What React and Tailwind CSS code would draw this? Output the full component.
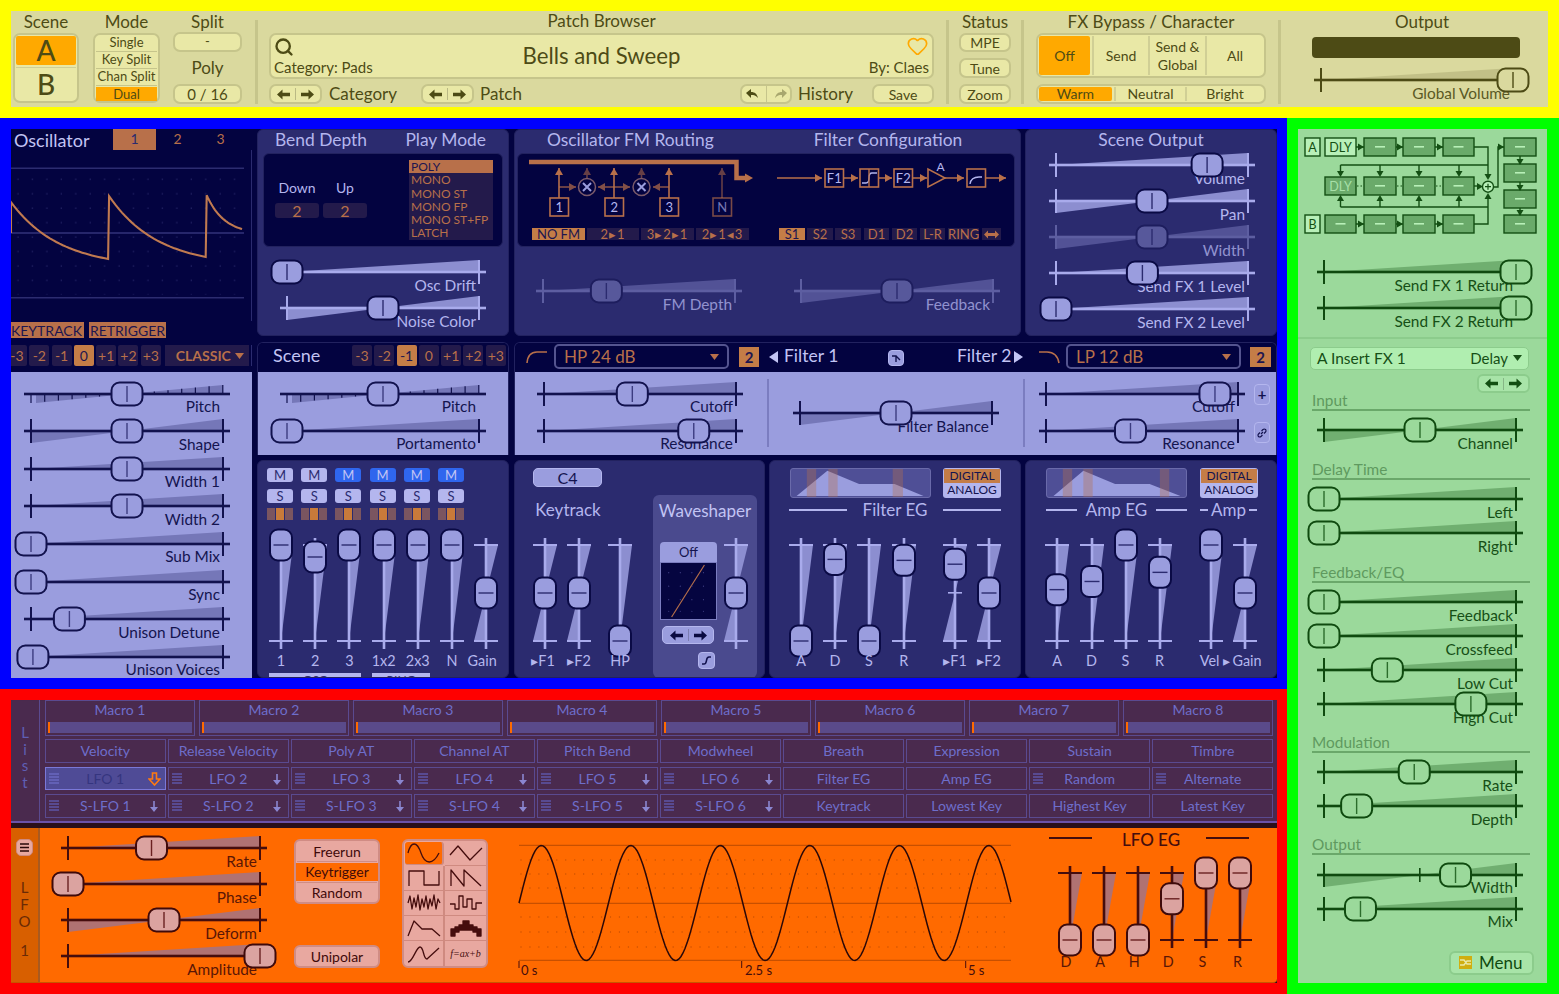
import React from "react";
import { Search, Heart } from "lucide-react";

// slider colour sets, svg attributes take the hex directly
const LAV = { line: "#12124e", tray: "#7577b8", fill: "#9a9dde", edge: "#12124e", mark: "#3c3c80", text: "text-[#14144f]" };
const NAVY = { line: "#a9abec", tray: "#8c8ed0", fill: "#9a9dde", edge: "#0a0a45", mark: "#2b2b6f", text: "text-[#b4b6ee]" };
const KHAKI = { line: "#4d4b15", tray: "#c2c087", fill: "#dad99e", edge: "#4d4b15", mark: "#4d4b15", text: "text-[#5b5925]" };
const GREEN = { line: "#0f4a0f", tray: "#70af70", fill: "#9bd99b", edge: "#0f4a0f", mark: "#2c6c2c", text: "text-[#164f16]" };
const ORANGE = { line: "#450d0d", tray: "#b07272", fill: "#dba3a0", edge: "#3f0a0a", mark: "#6a2020", text: "text-[#5a1606]" };

const ACCENT = "#b8704a";

function HSlider({ v, label, t, kind = "uni", dim, midTick, className = "" }) {
  const x = 7 + 192 * v;
  return (
    <div className={`relative w-[206px] h-[36px] shrink-0 ${className}`}>
      <span className={`absolute right-[10px] top-[21.5px] text-[15.4px] leading-[18px] whitespace-nowrap ${t.text} ${dim ? "opacity-75" : ""}`}>{label}</span>
      <svg className={`absolute left-0 top-0 overflow-visible ${dim ? "opacity-40" : ""}`} width="206" height="36">
        {kind === "uni" && <polygon points="7,18 199,6 199,18" fill={t.tray} />}
        {kind === "bi" && <polygon points="103,18 7,30 7,18" fill={t.tray} />}
        {kind === "bi" && <polygon points="103,18 199,6 199,18" fill={t.tray} />}
        {kind === "ladder" && <polygon points="103,18 12,27 12,18" fill={t.tray} />}
        {kind === "ladder" && <polygon points="103,18 199,9 199,18" fill={t.tray} />}
        {kind === "ladder" && [...Array(15).keys()].map((i) => {
          const tx = 7 + i * 13.7;
          const h = i < 7 ? 18 + 9 * (1 - i / 7) : 18 - 9 * ((i - 7) / 7);
          return <line key={i} x1={tx} x2={tx} y1="18" y2={h} stroke={t.line} strokeWidth="1.2" />;
        })}
        <rect x="0" y="16.7" width="206" height="2.6" fill={t.line} />
        {kind !== "ladder" && <rect x="6" y="6" width="2" height="24" fill={t.line} />}
        {kind !== "ladder" && <rect x="198" y="6" width="2" height="24" fill={t.line} />}
        {midTick && <rect x="102" y="11" width="1.6" height="14" fill={t.line} />}
        <rect x={x - 15.5} y="6.5" width="31" height="23" rx="8" fill={t.fill} stroke={t.edge} strokeWidth="2" />
        <rect x={x - 0.7} y="10" width="1.4" height="16" fill={t.mark} />
      </svg>
    </div>
  );
}

function VSlider({ v, label, t, kind = "uni", range = 96, midTick, labelCls = "left-[12px]", className = "" }) {
  const y = 7 + range * (1 - v);
  const b = 7 + range;
  const c = 7 + range / 2;
  return (
    <div className={`relative w-[24px] shrink-0 ${className}`} style={{ height: range + 15 }}>
      <svg className="absolute left-0 top-0 overflow-visible" width="24" height={range + 15}>
        {kind === "uni" && <polygon points={`12,${b} 24,7 12,7`} fill={t.tray} />}
        {kind === "bi" && <polygon points={`12,${c} 24,7 12,7`} fill={t.tray} />}
        {kind === "bi" && <polygon points={`12,${c} 0,${b} 12,${b}`} fill={t.tray} />}
        <rect x="10.7" y="0" width="2.6" height={range + 15} fill={t.line} />
        <rect x="0" y="6" width="24" height="2" fill={t.line} />
        <rect x="0" y={b - 1} width="24" height="2" fill={t.line} />
        {midTick && <rect x="5" y={c - 1} width="14" height="1.6" fill={t.line} />}
        <rect x="1" y={y - 15.5} width="22" height="31" rx="8" fill={t.fill} stroke={t.edge} strokeWidth="2" />
        <rect x="4.5" y={y - 0.7} width="15" height="1.4" fill={t.mark} />
      </svg>
      {label && <span className={`absolute ${labelCls} -translate-x-1/2 text-[14.4px] leading-[16px] whitespace-nowrap ${t.text} ${range > 80 ? "top-[115px]" : "top-[88px]"}`}>{label}</span>}
    </div>
  );
}

function Arrows({ color = "#4d4b15", w = 13 }) {
  return (
    <span className="flex items-center gap-[5px]">
      <svg width={w} height="11" viewBox="0 0 13 11"><path d="M0 5.5 L5.5 0.5 V3.7 H13 V7.3 H5.5 V10.5 Z" fill={color} /></svg>
      <span className="w-px h-[12px] bg-black/20" />
      <svg width={w} height="11" viewBox="0 0 13 11"><path d="M13 5.5 L7.5 0.5 V3.7 H0 V7.3 H7.5 V10.5 Z" fill={color} /></svg>
    </span>
  );
}

const KBTN = "flex items-center justify-center rounded-[7px] bg-[#e9e8a6] border-2 border-[#c6c58b] text-[#4d4b15] box-border";

function TopBar() {
  return (
    <div className="h-[118px] p-[11px] bg-[#ffff00]">
      <div className="relative flex h-[96px] w-[1537px] bg-[#dad99e] text-[#4d4b15]">
        {/* scene */}
        <div className="ml-[2px] w-[66px]">
          <div className="h-[22px] text-center text-[17px] leading-[21px]">Scene</div>
          <div className="h-[70px] rounded-[7px] bg-[#e9e8a6] border-2 border-[#c6c58b] p-[1px] flex flex-col">
            <div className="h-[30px] rounded-[2px] bg-[#ffa900] text-center text-[28px] font-medium leading-[29px]">A</div>
            <div className="h-px mt-[2px] bg-[#d0cf95]" />
            <div className="flex-1 text-center text-[28px] font-medium leading-[32px]">B</div>
          </div>
        </div>
        {/* mode */}
        <div className="ml-[14px] w-[67px]">
          <div className="h-[22px] text-center text-[17px] leading-[21px]">Mode</div>
          <div className="h-[70px] rounded-[7px] bg-[#e9e8a6] border-2 border-[#c6c58b] px-[1px] flex flex-col text-[13px] text-center leading-[15px]">
            <div className="h-[17px] border-b border-[#c6c58b]">Single</div>
            <div className="h-[17.5px] border-b border-[#c6c58b]">Key Split</div>
            <div className="h-[17.5px] border-b border-[#c6c58b]">Chan Split</div>
            <div className="h-[14px] mt-[1px] bg-[#ffa900] leading-[14px]">Dual</div>
          </div>
        </div>
        {/* split / poly */}
        <div className="ml-[13px] w-[69px]">
          <div className="h-[21px] text-center text-[17px] leading-[21px]">Split</div>
          <div className={`${KBTN} h-[20px] text-[13px]`}>-</div>
          <div className="h-[32px] text-center text-[17px] leading-[31px]">Poly</div>
          <div className={`${KBTN} h-[20px] text-[15px]`}>0 / 16</div>
        </div>
        <div className="ml-[13px] mt-[9px] w-[3px] h-[84px] bg-[#c6c58b]" />
        {/* patch browser */}
        <div className="ml-[11px] w-[665px]">
          <div className="h-[22px] text-center text-[17px] leading-[20px]">Patch Browser</div>
          <div className="h-[46px] rounded-[7px] bg-[#e9e8a6] border-2 border-[#c6c58b] flex items-stretch justify-between px-[3px]">
            <div className="w-[120px] flex flex-col justify-between">
              <Search size={20} strokeWidth={2.8} className="mt-[2px]" />
              <span className="text-[15px] leading-[20px]">Category: Pads</span>
            </div>
            <div className="text-[22.2px] leading-[42px] whitespace-nowrap">Bells and Sweep</div>
            <div className="w-[120px] flex flex-col justify-between items-end">
              <Heart size={23} strokeWidth={1.8} className="text-[#ffa900]" />
              <span className="text-[15px] leading-[20px]">By: Claes</span>
            </div>
          </div>
          <div className="flex items-center mt-[5px] h-[20px]">
            <div className={`${KBTN} w-[53px] h-[20px]`}><Arrows /></div>
            <span className="ml-[7px] w-[92px] text-[17px]">Category</span>
            <div className={`${KBTN} w-[53px] h-[20px]`}><Arrows /></div>
            <span className="ml-[6px] flex-1 text-[17px]">Patch</span>
            <div className={`${KBTN} w-[52px] h-[20px]`}>
              <svg width="15" height="12" viewBox="0 0 15 12"><path d="M1 5 L6 1 V4 C10 4 12 6 13 10 C11 7.5 9 7 6 7 V10 Z" fill="#4d4b15" /></svg>
              <span className="w-px h-[17px] mx-[6px] bg-[#c6c58b]" />
              <svg width="15" height="12" viewBox="0 0 15 12"><path d="M14 5 L9 1 V4 C5 4 3 6 2 10 C4 7.5 6 7 9 7 V10 Z" fill="#a8a76e" /></svg>
            </div>
            <span className="ml-[6px] w-[74px] text-[17px]">History</span>
            <div className={`${KBTN} w-[62px] h-[20px] text-[14px]`}>Save</div>
          </div>
        </div>
        <div className="ml-[12px] mt-[9px] w-[3px] h-[84px] bg-[#c6c58b]" />
        {/* status */}
        <div className="ml-[10px] w-[52px]">
          <div className="h-[22px] text-center text-[17px] leading-[21px] whitespace-nowrap">Status</div>
          <div className={`${KBTN} h-[19px] text-[14px]`}>MPE</div>
          <div className={`${KBTN} h-[20px] mt-[6px] text-[14px]`}>Tune</div>
          <div className={`${KBTN} h-[20px] mt-[6px] text-[14px]`}>Zoom</div>
        </div>
        <div className="ml-[10px] mt-[9px] w-[3px] h-[84px] bg-[#c6c58b]" />
        {/* fx bypass */}
        <div className="ml-[12px] w-[230px]">
          <div className="h-[22px] text-center text-[17px] leading-[21px]">FX Bypass / Character</div>
          <div className="h-[45px] rounded-[7px] bg-[#e9e8a6] border-2 border-[#c6c58b] flex text-[14px] text-center items-stretch p-[1px]">
            <div className="w-[51px] rounded-[2px] bg-[#ffa900] flex items-center justify-center">Off</div>
            <div className="w-[58px] ml-[2px] border-l-2 border-r-2 border-[#d0cf95] flex items-center justify-center">Send</div>
            <div className="w-[57px] border-r-2 border-[#d0cf95] flex items-center justify-center leading-[18px]">Send &amp;<br />Global</div>
            <div className="flex-1 flex items-center justify-center">All</div>
          </div>
          <div className="h-[20px] mt-[6px] rounded-[7px] bg-[#e9e8a6] border-2 border-[#c6c58b] flex text-[14px] text-center items-stretch p-[1px]">
            <div className="w-[73px] rounded-[2px] bg-[#ffa900] leading-[14px]">Warm</div>
            <div className="w-[73px] ml-[2px] border-l-2 border-r-2 border-[#d0cf95] leading-[14px]">Neutral</div>
            <div className="flex-1 leading-[14px]">Bright</div>
          </div>
        </div>
        <div className="ml-[12px] mt-[9px] w-[3px] h-[84px] bg-[#c6c58b]" />
        {/* output */}
        <div className="ml-[31px] w-[215px]">
          <div className="h-[26px] ml-[5px] text-center text-[17px] leading-[21px]">Output</div>
          <div className="w-[208px] h-[21px] rounded-[4px] bg-[#4d4b15]" />
          <HSlider v={1} label="Global Volume" t={KHAKI} className="ml-[2px] mt-[4px]" />
        </div>
      </div>
    </div>
  );
}

const STEP = "h-[21px] flex items-center justify-center rounded-[2px] text-[14px] leading-none";

function Steps({ active, className = "" }) {
  return (
    <div className={`flex gap-[2.3px] ${className}`}>
      {["-3", "-2", "-1", "0", "+1", "+2", "+3"].map((s) => (
        <div key={s} className={`${STEP} w-[20px] ${s === active ? "bg-[#c47d47] text-[#1d1650]" : "bg-[#231a4b] text-[#b8704a]"}`}>{s}</div>
      ))}
    </div>
  );
}

function OscColumn() {
  const sawPts = (x0, y0, x1, y1) => {
    const pts = [];
    for (let i = 0; i <= 30; i++) {
      const k = i / 30;
      const e = (1 - Math.exp(-2 * k)) / (1 - Math.exp(-2));
      pts.push(`${x0 + (x1 - x0) * k},${y0 + (y1 - y0) * e}`);
    }
    return pts.join(" ");
  };
  return (
    <div className="w-[241px] shrink-0 h-[549px] flex flex-col">
      <div className="h-[21px] flex items-start text-[#c2c4f4]">
        <span className="ml-[3px] w-[99px] text-[18px] leading-[22px]">Oscillator</span>
        <div className="w-[43px] h-[21px] bg-[#b8704a] text-[#2b2b6f] text-center text-[14px] leading-[20px]">1</div>
        <div className="w-[43px] text-center text-[14px] leading-[20px] text-[#b8704a]">2</div>
        <div className="w-[43px] text-center text-[14px] leading-[20px] text-[#b8704a]">3</div>
      </div>
      <svg width="241" height="171" viewBox="11 150 241 171" className="border-r border-[#2b2b6f]">
        <defs>
          <pattern id="dots" x="11" y="178" width="14.5" height="14.5" patternUnits="userSpaceOnUse">
            <circle cx="7" cy="1" r="0.6" fill="#3a3a80" />
          </pattern>
        </defs>
        <rect x="11" y="175" width="234" height="120" fill="url(#dots)" />
        <line x1="11" x2="245" y1="168" y2="168" stroke="#2c2c70" strokeWidth="1.5" />
        <line x1="11" x2="245" y1="233" y2="233" stroke="#33337a" strokeWidth="1.5" />
        <line x1="11" x2="245" y1="298" y2="298" stroke="#2c2c70" strokeWidth="1.5" />
        <polyline fill="none" stroke="#c07a50" strokeWidth="2.1" points={`11,233 11,202 ${sawPts(11, 202, 108.5, 259)} 109.5,196 ${sawPts(109.5, 196, 206.5, 257)} 207.5,195 ${sawPts(207.5, 195, 243, 229)}`} />
      </svg>
      <div className="h-[16px] mt-[1px] flex gap-[5px] text-[#1d1650] text-[14px] leading-[17px]">
        <div className="bg-[#b8704a] w-[73px] whitespace-nowrap">KEYTRACK</div>
        <div className="bg-[#b8704a] w-[77px] text-center whitespace-nowrap">RETRIGGER</div>
      </div>
      <div className="mt-[7px] h-[21px] flex overflow-hidden border-r border-[#2b2b6f] w-[241px]">
        <Steps active="0" className="ml-[-4px]" />
        <div className="ml-[4px] w-[84px] h-[21px] bg-[#231a4b] flex items-center justify-between pl-[11px] pr-[5px] text-[#b8704a] text-[14px] font-bold">
          CLASSIC <svg width="9" height="6"><polygon points="0,0 9,0 4.5,6" fill="#b8704a" /></svg>
        </div>
      </div>
      <div className="mt-[6px] flex-1 bg-[#9a9dde] overflow-hidden pl-[13px] pt-[3.6px] flex flex-col gap-[1.6px]">
        <HSlider v={0.5} label="Pitch" t={LAV} kind="ladder" />
        <HSlider v={0.5} label="Shape" t={LAV} kind="bi" />
        <HSlider v={0.5} label="Width 1" t={LAV} />
        <HSlider v={0.5} label="Width 2" t={LAV} />
        <HSlider v={0} label="Sub Mix" t={LAV} />
        <HSlider v={0} label="Sync" t={LAV} />
        <HSlider v={0.2} label="Unison Detune" t={LAV} />
        <HSlider v={0.01} label="Unison Voices" t={LAV} />
      </div>
    </div>
  );
}

const PANEL = "rounded-[6px] bg-[#2b2b6f] border border-[#22225f] box-border";
const TITLE = "text-[17.4px] text-[#b4b6ee] leading-[20px]";

function BendPanel() {
  return (
    <div className={`${PANEL} w-[252px] h-[207px]`}>
      <div className={`h-[23px] flex justify-between pl-[17px] pr-[22px] ${TITLE}`}>
        <span>Bend Depth</span>
        <span>Play Mode</span>
      </div>
      <div className="ml-[5px] w-[240px] h-[94px] rounded-[6px] bg-[#030340] border border-[#22225f] flex">
        <div className="w-[145px] pl-[11px] pt-[25px]">
          <div className="flex text-[14px] text-[#b4b6ee] leading-[18px] text-center">
            <span className="w-[44px]">Down</span>
            <span className="w-[44px] ml-[4px]">Up</span>
          </div>
          <div className="flex gap-[4px] mt-[6px] text-[16px] text-[#b8704a] text-center leading-[15px]">
            <div className="w-[44px] h-[15px] rounded-[3px] bg-[#231a4b]">2</div>
            <div className="w-[44px] h-[15px] rounded-[3px] bg-[#231a4b]">2</div>
          </div>
        </div>
        <div className="mt-[6px] w-[84px] h-[80px] pl-[2px] bg-[#231a4b] text-[#b8704a] text-[12px] leading-[13.3px]">
          <div className="bg-[#b8704a] text-[#1d1650] -ml-[2px] pl-[2px]">POLY</div>
          <div>MONO</div>
          <div>MONO ST</div>
          <div>MONO FP</div>
          <div className="whitespace-nowrap">MONO ST+FP</div>
          <div>LATCH</div>
        </div>
      </div>
      <HSlider v={0} label="Osc Drift" t={NAVY} className="ml-[22px] mt-[7px]" />
      <HSlider v={0.5} label="Noise Color" t={NAVY} kind="bi" className="ml-[22px]" />
    </div>
  );
}

function Arrow({ x1, y1, x2, y2, c = ACCENT, o = 1 }) {
  const dx = Math.sign(x2 - x1);
  const dy = Math.sign(y2 - y1);
  const head = dx
    ? `${x2},${y2} ${x2 - 7 * dx},${y2 - 4} ${x2 - 7 * dx},${y2 + 4}`
    : `${x2},${y2} ${x2 - 4},${y2 - 7 * dy} ${x2 + 4},${y2 - 7 * dy}`;
  return (
    <g opacity={o}>
      <line x1={x1} y1={y1} x2={x2} y2={y2} stroke={c} strokeWidth="1.6" />
      <polygon points={head} fill={c} />
    </g>
  );
}

function OscBox({ x, y, label, o = 1, w = 18.5 }) {
  return (
    <g opacity={o}>
      <rect x={x} y={y} width={w} height="18" fill="#030340" stroke={ACCENT} strokeWidth="1.6" />
      {label && <text x={x + w / 2} y={y + 14} textAnchor="middle" fontSize="13" fill="#b4b6ee" fontFamily="Lato">{label}</text>}
    </g>
  );
}

function Xnode({ x }) {
  return (
    <g>
      <circle cx={x} cy="187" r="8.5" fill="none" stroke="#7a5a6a" strokeWidth="1.5" />
      <path d={`M${x - 4} 183 L${x + 4} 191 M${x + 4} 183 L${x - 4} 191`} stroke="#9a9dde" strokeWidth="2" />
    </g>
  );
}

const ROUTE = "h-[12px] bg-[#231a4b] text-[#b8704a] text-[13px] leading-[12px] text-center whitespace-nowrap";
const ROUTE_ON = "h-[12px] bg-[#c47d47] text-[#1d1650] text-[13px] leading-[12px] text-center whitespace-nowrap";

function FmPanel() {
  return (
    <div className={`${PANEL} w-[507px] h-[207px]`}>
      <div className={`h-[23px] flex ${TITLE}`}>
        <span className="ml-[32px]">Oscillator FM Routing</span>
        <span className="ml-[100px]">Filter Configuration</span>
      </div>
      <div className="ml-[2px] w-[498px] h-[94px] rounded-[6px] bg-[#030340] border border-[#22225f] overflow-hidden">
        <svg width="496" height="72" viewBox="518 154 496 72" className="block">
          <path d="M529 162 H736.5 V178 H746" fill="none" stroke={ACCENT} strokeWidth="4.5" />
          <polygon points="753,178 745,173.5 745,182.5" fill={ACCENT} />
          <Arrow x1={559} y1={198} x2={559} y2={168} />
          <Arrow x1={614} y1={198} x2={614} y2={168} />
          <Arrow x1={669} y1={198} x2={669} y2={168} />
          <Arrow x1={722} y1={198} x2={722} y2={168} o={0.55} />
          <Arrow x1={587} y1={178} x2={587} y2={168} o={0.55} />
          <Arrow x1={641.5} y1={178} x2={641.5} y2={168} o={0.55} />
          <Arrow x1={559} y1={187} x2={576} y2={187} o={0.7} />
          <Arrow x1={614} y1={187} x2={598} y2={187} o={0.7} />
          <Arrow x1={614} y1={187} x2={630} y2={187} o={0.7} />
          <Arrow x1={669} y1={187} x2={653} y2={187} o={0.7} />
          <Xnode x={587} />
          <Xnode x={641.5} />
          <OscBox x={550} y={198} label="1" />
          <OscBox x={605} y={198} label="2" />
          <OscBox x={660} y={198} label="3" />
          <OscBox x={713} y={198} label="N" o={0.65} />

          <Arrow x1={777} y1={178} x2={822} y2={178} />
          <OscBox x={825} y={169} label="F1" />
          <Arrow x1={844} y1={178} x2={858} y2={178} />
          <OscBox x={860} y={169} />
          <path d="M862 183 H866 Q869 183 869 178 Q869 173 872 173 H877" fill="none" stroke="#b4b6ee" strokeWidth="1.4" />
          <line x1="869" x2="869" y1="169" y2="187" stroke={ACCENT} strokeWidth="1.4" />
          <Arrow x1={878} y1={178} x2={892} y2={178} />
          <OscBox x={894} y={169} label="F2" />
          <Arrow x1={913} y1={178} x2={927} y2={178} />
          <polygon points="928,169 928,187 945,178" fill="none" stroke={ACCENT} strokeWidth="1.6" />
          <text x="940.5" y="171" textAnchor="middle" fontSize="12" fill="#b4b6ee" fontFamily="Lato">A</text>
          <Arrow x1={945} y1={178} x2={964} y2={178} />
          <OscBox x={967} y={169} />
          <path d="M970 184 Q971 177 979 177 H982" fill="none" stroke="#b4b6ee" strokeWidth="1.4" />
          <Arrow x1={986} y1={178} x2={1006} y2={178} />
        </svg>
        <div className="flex mt-[2px] ml-[14px]">
          <div className={`${ROUTE_ON} w-[53px]`}>NO FM</div>
          <div className={`${ROUTE} w-[52px] ml-[2px] tracking-[1px]`}>2▸1</div>
          <div className={`${ROUTE} w-[53px] ml-[2px] tracking-[1px]`}>3▸2▸1</div>
          <div className={`${ROUTE} w-[53px] ml-[2px] tracking-[1px]`}>2▸1◂3</div>
          <div className={`${ROUTE_ON} w-[26px] ml-[30px]`}>S1</div>
          <div className={`${ROUTE} w-[26px] ml-[2px]`}>S2</div>
          <div className={`${ROUTE} w-[26px] ml-[2px]`}>S3</div>
          <div className={`${ROUTE} w-[25px] ml-[3px]`}>D1</div>
          <div className={`${ROUTE} w-[25px] ml-[3px]`}>D2</div>
          <div className={`${ROUTE} w-[25px] ml-[3px]`}>L-R</div>
          <div className={`${ROUTE} w-[31px] ml-[3px] text-[12px]`}>RING</div>
          <div className={`${ROUTE} w-[19px] ml-[3px] flex items-center justify-center`}>
            <svg width="15" height="9" viewBox="0 0 15 9"><path d="M0 4.5 L4 0.5 V3 H11 V0.5 L15 4.5 L11 8.5 V6 H4 V8.5 Z" fill={ACCENT} /></svg>
          </div>
        </div>
      </div>
      <div className="flex mt-[26px] ml-[21px]">
        <HSlider v={0.33} label="FM Depth" t={NAVY} dim />
        <HSlider v={0.5} label="Feedback" t={NAVY} kind="bi" dim className="ml-[52px]" />
      </div>
    </div>
  );
}

function SceneOutput() {
  return (
    <div className={`${PANEL} w-[252px] h-[207px]`}>
      <div className={`h-[23px] text-center ${TITLE}`}>Scene Output</div>
      <div className="ml-[23px] mt-[-6px] flex flex-col">
        <HSlider v={0.787} label="Volume" t={NAVY} />
        <HSlider v={0.5} label="Pan" t={NAVY} kind="bi" />
        <HSlider v={0.5} label="Width" t={NAVY} kind="bi" dim />
        <HSlider v={0.45} label="Send FX 1 Level" t={NAVY} />
        <HSlider v={0} label="Send FX 2 Level" t={NAVY} />
      </div>
    </div>
  );
}

function FilterSelect({ name, className = "" }) {
  return (
    <div className={`h-[25px] rounded-[5px] border-2 border-[#54548f] flex items-center justify-between pl-[8px] pr-[8px] text-[#b8704a] text-[17px] ${className}`}>
      {name}
      <svg width="9" height="6"><polygon points="0,0 9,0 4.5,6" fill="#b8704a" /></svg>
    </div>
  );
}

const SMALLBTN = "flex items-center justify-center rounded-[4px] bg-[#9a9dde] border border-[#b4b6ee] box-border";

function SceneFilterRow() {
  return (
    <div className="flex mt-[6px]">
      <div className="w-[252px] h-[113px] rounded-t-[6px] overflow-hidden border border-[#22225f] border-b-0 box-border">
        <div className="h-[29px] bg-[#030340] flex items-center pb-[4px]">
          <span className="ml-[15px] w-[79px] text-[18px] text-[#c2c4f4]">Scene</span>
          <Steps active="-1" />
        </div>
        <div className="h-[84px] bg-[#9a9dde] pl-[22px] pt-[3.6px] flex flex-col gap-[1.4px]">
          <HSlider v={0.5} label="Pitch" t={LAV} kind="ladder" />
          <HSlider v={0} label="Portamento" t={LAV} />
        </div>
      </div>
      <div className="ml-[5px] w-[763px] h-[113px] rounded-t-[6px] overflow-hidden border border-[#22225f] border-b-0 box-border">
        <div className="h-[29px] bg-[#030340] flex items-center pb-[2px]">
          <svg width="22" height="14" viewBox="0 0 22 14" className="ml-[11px]"><path d="M1 13 Q2 2 11 2 H21" fill="none" stroke={ACCENT} strokeWidth="1.6" /></svg>
          <FilterSelect name="HP 24 dB" className="ml-[6px] w-[175px]" />
          <div className="ml-[10px] w-[20px] h-[20px] bg-[#c47d47] text-[#1d1650] text-center text-[15px] leading-[20px] font-bold">2</div>
          <svg width="9" height="12" className="ml-[10px]"><polygon points="0,6 9,0 9,12" fill="#c2c4f4" /></svg>
          <span className="ml-[6px] text-[#c2c4f4] text-[17.5px] whitespace-nowrap w-[93px]">Filter 1</span>
          <div className={`${SMALLBTN} w-[16px] h-[16px] ml-[11px] mt-[2px]`}>
            <svg width="10" height="10" viewBox="0 0 10 10"><path d="M1 3 H5 V9 M5 3 L9 7" fill="none" stroke="#12124e" strokeWidth="1.4" /></svg>
          </div>
          <span className="ml-[53px] text-[#c2c4f4] text-[17.5px] whitespace-nowrap w-[57px]">Filter 2</span>
          <svg width="9" height="12" className="mr-[4px]"><polygon points="9,6 0,0 0,12" fill="#c2c4f4" /></svg>
          <svg width="22" height="14" viewBox="0 0 22 14" className="ml-[11px]"><path d="M1 2 H9 Q19 2 21 13" fill="none" stroke={ACCENT} strokeWidth="1.6" /></svg>
          <FilterSelect name="LP 12 dB" className="ml-[6px] w-[175px]" />
          <div className="ml-[9px] w-[21px] h-[20px] bg-[#c47d47] text-[#1d1650] text-center text-[15px] leading-[20px] font-bold">2</div>
        </div>
        <div className="h-[84px] bg-[#9a9dde] flex">
          <div className="ml-[22px] pt-[3.6px] flex flex-col gap-[1.4px]">
            <HSlider v={0.46} label="Cutoff" t={LAV} />
            <HSlider v={0.78} label="Resonance" t={LAV} />
          </div>
          <div className="ml-[24px] mt-[7px] w-[2px] h-[68px] bg-[#7b7dc0]" />
          <HSlider v={0.5} label="Filter Balance" t={LAV} kind="bi" className="ml-[24px] mt-[23px]" />
          <div className="ml-[24px] mt-[7px] w-[2px] h-[68px] bg-[#7b7dc0]" />
          <div className="ml-[14px] pt-[3.6px] flex flex-col gap-[1.4px]">
            <HSlider v={0.88} label="Cutoff" t={LAV} />
            <HSlider v={0.44} label="Resonance" t={LAV} />
          </div>
          <div className="ml-[9px] pt-[12px] flex flex-col gap-[17px]">
            <div className={`${SMALLBTN} w-[16px] h-[21px] text-[#12124e] text-[15px] font-bold`}>+</div>
            <div className={`${SMALLBTN} w-[16px] h-[21px]`}>
              <svg width="10" height="10" viewBox="0 0 10 10"><path d="M4 6 L6 4 M3 4.5 L1.5 6 A1.7 1.7 0 0 0 4 8.5 L5.5 7 M4.5 3 L6 1.5 A1.7 1.7 0 0 1 8.5 4 L7 5.5" fill="none" stroke="#12124e" strokeWidth="1.1" /></svg>
            </div>
          </div>
        </div>
      </div>
    </div>
  );
}

function Mixer() {
  const cols = ["1", "2", "3", "1x2", "2x3", "N"];
  return (
    <div className={`${PANEL} w-[252px] h-[218px] overflow-hidden pt-[7px]`}>
      <div className="flex gap-[8.2px] ml-[9px]">
        {cols.map((c, i) => (
          <div key={c} className={`w-[26px] h-[14px] rounded-[3px] text-center text-[13px] leading-[14px] ${i < 2 ? "bg-[#b4b6ee] text-[#2b2b6f]" : "bg-[#2f66ee] text-[#c2c4f4]"}`}>M</div>
        ))}
      </div>
      <div className="flex gap-[8.2px] ml-[9px] mt-[7px]">
        {cols.map((c) => (
          <div key={c} className="w-[26px] h-[14px] rounded-[3px] bg-[#b4b6ee] text-[#2b2b6f] text-center text-[13px] leading-[14px]">S</div>
        ))}
      </div>
      <div className="flex gap-[8.2px] ml-[9px] mt-[5px]">
        {cols.map((c) => (
          <div key={c} className="w-[26px] h-[12px] flex gap-[1px]">
            <div className="flex-1 bg-[#7a5560]" />
            <div className="flex-1 bg-[#c87a3a]" />
            <div className="flex-1 bg-[#7a5560]" />
          </div>
        ))}
      </div>
      <div className="flex gap-[10.2px] ml-[11px] mt-[18px]">
        <VSlider v={1} label="1" t={NAVY} />
        <VSlider v={0.875} label="2" t={NAVY} />
        <VSlider v={1} label="3" t={NAVY} />
        <VSlider v={1} label="1x2" t={NAVY} />
        <VSlider v={1} label="2x3" t={NAVY} />
        <VSlider v={1} label="N" t={NAVY} />
        <VSlider v={0.5} label="Gain" t={NAVY} kind="bi" labelCls="left-[8px]" />
      </div>
      <div className="flex mt-[24px] ml-[11px] text-[#2b2b6f] text-[12px] text-center leading-[14px]">
        <div className="w-[92px] h-[14px] bg-[#b4b6ee]">OSC</div>
        <div className="w-[58px] h-[14px] ml-[11px] bg-[#b4b6ee]">RING</div>
      </div>
    </div>
  );
}

function KeytrackPanel() {
  return (
    <div className={`${PANEL} w-[251px] h-[218px] flex overflow-hidden`}>
      <div className="w-[138px]">
        <div className={`${SMALLBTN} ml-[18px] mt-[7px] w-[69px] h-[19px] rounded-[5px] text-[#14144f] text-[16px] leading-none`}>C4</div>
        <div className="h-[24px] mt-[11px] ml-[18px] w-[70px] text-center text-[17px] text-[#b4b6ee] leading-[24px] whitespace-nowrap">Keytrack</div>
        <div className="flex ml-[18px] mt-[16px]">
          <VSlider v={0.5} label="▸F1" t={NAVY} kind="bi" labelCls="left-[10px]" />
          <VSlider v={0.5} label="▸F2" t={NAVY} kind="bi" labelCls="left-[12px]" className="ml-[10px]" />
          <VSlider v={0} label="HP" t={NAVY} className="ml-[17px]" />
        </div>
      </div>
      <div className="w-[104px] mt-[34px] h-[183px] rounded-[6px] bg-[#4a4a8e]">
        <div className="h-[32px] text-center text-[17px] text-[#c2c4f4] leading-[32px]">Waveshaper</div>
        <div className="flex mt-[11px] ml-[7px]">
          <div className="w-[57px] mt-[4px]">
            <div className="h-[20px] bg-[#9a9dde] rounded-t-[4px] text-center text-[13px] text-[#14144f] leading-[20px]">Off</div>
            <svg width="57" height="58" viewBox="0 0 57 58" className="block bg-[#050540] border border-[#7b7dc0] box-border">
              <path d="M11 56 L45 2" stroke={ACCENT} strokeWidth="1.2" fill="none" />
              {[8, 20, 32, 44].map((x) => [10, 24, 38, 50].map((y) => <circle key={`${x}-${y}`} cx={x} cy={y} r="0.6" fill="#44448a" />))}
            </svg>
            <div className={`${SMALLBTN} rounded-[5px] ml-[2px] mt-[6px] w-[52px] h-[18px]`}><Arrows color="#0a0a40" /></div>
            <div className={`${SMALLBTN} ml-[38px] mt-[8px] w-[17px] h-[17px]`}>
              <svg width="11" height="11" viewBox="0 0 11 11"><path d="M1 9 H3 Q5 9 5.5 5.5 Q6 2 8 2 H10" fill="none" stroke="#12124e" strokeWidth="1.6" /></svg>
            </div>
          </div>
          <VSlider v={0.5} t={NAVY} kind="bi" className="ml-[7px]" />
        </div>
      </div>
    </div>
  );
}

function EgDisplay({ bands, pts }) {
  return (
    <svg width="141" height="30" viewBox="0 0 141 30" className="block rounded-[3px] border border-[#6a6aaa] bg-[#4f4f96] box-border">
      <polygon points={pts} fill="#9a9dde" />
      {bands.map(([a, b]) => <rect key={a} x={a} y="0" width={b - a} height="30" fill="#b8704a" opacity="0.35" />)}
    </svg>
  );
}

function DigitalAnalog({ className = "" }) {
  return (
    <div className={`w-[58px] h-[30px] rounded-[3px] bg-[#b4b6ee] p-[1px] text-[#14144f] text-[12px] leading-[14px] text-center ${className}`}>
      <div className="h-[14px] bg-[#c47d47]">DIGITAL</div>
      <div>ANALOG</div>
    </div>
  );
}

function EgRule({ w }) {
  return <div className="h-[1.5px] bg-[#b4b6ee] shrink-0" style={{ width: w }} />;
}

function FilterEgPanel() {
  return (
    <div className={`${PANEL} w-[252px] h-[218px]`}>
      <div className="flex ml-[20px] mt-[7px]">
        <EgDisplay pts="2,29 35,2 69,16 107,16 138,29" bands={[[13, 23], [36, 46], [105, 116]]} />
        <DigitalAnalog className="ml-[12px]" />
      </div>
      <div className="flex items-center ml-[19px] h-[20px] mt-[2px]">
        <EgRule w={58} />
        <span className="w-[96px] text-center text-[17px] text-[#b4b6ee]">Filter EG</span>
        <EgRule w={58} />
      </div>
      <div className="flex ml-[19px] mt-[18px]">
        <VSlider v={0} label="A" t={NAVY} />
        <VSlider v={0.85} label="D" t={NAVY} className="ml-[10px]" />
        <VSlider v={0} label="S" t={NAVY} className="ml-[10px]" />
        <VSlider v={0.84} label="R" t={NAVY} className="ml-[10.7px]" />
        <VSlider v={0.8} label="▸F1" t={NAVY} kind="bi" midTick className="ml-[27.3px]" />
        <VSlider v={0.5} label="▸F2" t={NAVY} kind="bi" className="ml-[10px]" />
      </div>
    </div>
  );
}

function AmpEgPanel() {
  return (
    <div className={`${PANEL} w-[252px] h-[218px]`}>
      <div className="flex ml-[20px] mt-[7px]">
        <EgDisplay pts="3,29 35,2 69,16 106,16 139,29" bands={[[13, 23], [35, 45], [117, 127]]} />
        <DigitalAnalog className="ml-[13px]" />
      </div>
      <div className="flex items-center ml-[20px] h-[20px] mt-[2px]">
        <EgRule w={31} />
        <span className="w-[79px] text-center text-[17px] text-[#b4b6ee]">Amp EG</span>
        <EgRule w={31} />
        <div className="ml-[13px] w-[8px]"><EgRule w={8} /></div>
        <span className="w-[41px] text-center text-[17px] text-[#b4b6ee]">Amp</span>
        <EgRule w={8} />
      </div>
      <div className="flex ml-[19px] mt-[18px]">
        <VSlider v={0.535} label="A" t={NAVY} />
        <VSlider v={0.62} label="D" t={NAVY} className="ml-[10.5px]" />
        <VSlider v={1} label="S" t={NAVY} className="ml-[10px]" />
        <VSlider v={0.715} label="R" t={NAVY} className="ml-[10px]" />
        <VSlider v={1} label="Vel ▸" t={NAVY} labelCls="left-[16px]" className="ml-[27.5px]" />
        <VSlider v={0.5} label="Gain" t={NAVY} kind="bi" labelCls="left-[14px]" className="ml-[10px]" />
      </div>
    </div>
  );
}

function BlueSection() {
  return (
    <div className="h-[571px] p-[11px] bg-[#0000ff]">
      <div className="h-[549px] w-[1266px] bg-[#030340] overflow-hidden flex">
        <OscColumn />
        <div className="ml-[5px] w-[1020px] flex flex-col">
          <div className="flex h-[207px]">
            <BendPanel />
            <div className="ml-[5px]"><FmPanel /></div>
            <div className="ml-[4px]"><SceneOutput /></div>
          </div>
          <SceneFilterRow />
          <div className="flex mt-[5px]">
            <Mixer />
            <div className="ml-[5px]"><KeytrackPanel /></div>
            <div className="ml-[4px]"><FilterEgPanel /></div>
            <div className="ml-[4px]"><AmpEgPanel /></div>
          </div>
        </div>
      </div>
    </div>
  );
}

const MOD = "h-[23.5px] flex items-center justify-center relative border border-[#5a4a90] text-[#6e6ecb] text-[14px] box-border whitespace-nowrap";

function Burger({ c = "#5d55a8" }) {
  return (
    <svg width="10" height="12" className="absolute left-[3px] top-[5px]">
      <path d="M0 1 H10 M0 4 H10 M0 7 H10 M0 10 H10" stroke={c} strokeWidth="1.4" />
    </svg>
  );
}

function DownArrow({ c = "#8a86d0" }) {
  return (
    <svg width="8" height="11" viewBox="0 0 8 11" className="absolute right-[7px] top-[6px]">
      <path d="M3.2 0 H4.8 V6 H8 L4 11 L0 6 H3.2 Z" fill={c} />
    </svg>
  );
}

function ModCell({ name, lfo, burger }) {
  return (
    <div className={MOD}>
      {(lfo || burger) && <Burger />}
      {name}
      {lfo && <DownArrow />}
    </div>
  );
}

const ROW1 = ["Velocity", "Release Velocity", "Poly AT", "Channel AT", "Pitch Bend", "Modwheel", "Breath", "Expression", "Sustain", "Timbre"];
const ROW2 = [
  { name: "LFO 2", lfo: true },
  { name: "LFO 3", lfo: true },
  { name: "LFO 4", lfo: true },
  { name: "LFO 5", lfo: true },
  { name: "LFO 6", lfo: true },
  { name: "Filter EG" },
  { name: "Amp EG" },
  { name: "Random", burger: true },
  { name: "Alternate", burger: true },
];
const ROW3 = [
  { name: "S-LFO 1", lfo: true },
  { name: "S-LFO 2", lfo: true },
  { name: "S-LFO 3", lfo: true },
  { name: "S-LFO 4", lfo: true },
  { name: "S-LFO 5", lfo: true },
  { name: "S-LFO 6", lfo: true },
  { name: "Keytrack" },
  { name: "Lowest Key" },
  { name: "Highest Key" },
  { name: "Latest Key" },
];

function ModBar() {
  return (
    <div className="h-[123px] bg-[#4a2a4e] border-b-[2px] border-[#6b52a8] flex box-border">
      <div className="w-[29px] shrink-0 border-r border-[#5a4a90] flex flex-col items-center pt-[24px] text-[#5f5fb4] text-[15px] leading-[16.5px]">
        <span>L</span><span>i</span><span>s</span><span>t</span>
      </div>
      <div className="ml-[5px] w-[1228px]">
        <div className="grid grid-cols-8 gap-[4px]">
          {[1, 2, 3, 4, 5, 6, 7, 8].map((m) => (
            <div key={m} className="h-[36px] border border-[#5a4a90] box-border px-[2px]">
              <div className="h-[21px] text-center text-[14px] text-[#6e6ecb] leading-[18px]">Macro {m}</div>
              <div className="h-[11px] bg-[#5a4a8a] relative">
                <div className="absolute left-0 top-0 w-[2px] h-[11px] bg-[#ff6a00]" />
              </div>
            </div>
          ))}
        </div>
        <div className="grid grid-cols-10 gap-x-[2.5px] gap-y-[4px] mt-[3px]">
          {ROW1.map((n) => <ModCell key={n} name={n} />)}
          <div className={`${MOD} bg-[#4f4b96] border-[#7a78d8] !text-[#35357f]`}>
            <Burger c="#6a68c0" />
            LFO 1
            <svg width="13" height="14" viewBox="0 0 13 14" className="absolute right-[4px] top-[4px]">
              <path d="M4.5 1 H8.5 V7 H12 L6.5 13 L1 7 H4.5 Z" fill="none" stroke="#ff7a10" strokeWidth="1.6" />
            </svg>
          </div>
          {ROW2.map((c) => <ModCell key={c.name} {...c} />)}
          {ROW3.map((c) => <ModCell key={c.name} {...c} />)}
        </div>
      </div>
    </div>
  );
}

const SHAPE = "flex items-center justify-center border-[#cf8a80]";

function ShapeIcon({ d, fill }) {
  return (
    <svg width="36" height="20" viewBox="0 0 36 20">
      <path d={d} fill={fill ? "#450d0d" : "none"} stroke="#450d0d" strokeWidth="1.3" strokeLinejoin="round" />
    </svg>
  );
}

function LfoPanel() {
  const sine = [];
  for (let x = 519; x <= 1011; x += 2) sine.push(`${x},${903 - 57.5 * Math.sin(((x - 519) / 89.5) * 2 * Math.PI)}`);
  const dotRows = [860, 874, 888, 917, 932, 947];
  const icons = [
    { d: "M2 10 C5 -2 11 -2 15 10 C19 22 27 22 33 10" },
    { d: "M2 12 L10 3 L22 17 L34 5" },
    { d: "M3 18 V3 H18 V17 H33 V3" },
    { d: "M3 18 V2 L16 18 V2 L33 18" },
    { d: "M2 10 L4 3 L6 16 L8 5 L10 14 L12 2 L14 17 L16 6 L18 14 L20 3 L22 16 L24 6 L26 13 L28 2 L30 16 L32 6 L34 10" },
    { d: "M2 11 H7 V16 H11 V3 H15 V14 H19 V6 H24 V16 H28 V10 H34" },
    { d: "M2 18 L8 3 L16 11 H26 L34 18" },
    { d: "M3 18 V11 H7 V9 H11 V7 H15 V3 H21 V7 H25 V9 H29 V11 H33 V18 H29 V14 H25 V12 H11 V14 H7 V18 Z", fill: true },
    { d: "M2 18 C7 18 10 3 14 3 C18 3 17 15 21 15 L33 4" },
  ];
  return (
    <div className="h-[155px] mt-[5px] rounded-br-[4px] bg-[#ff6a00] flex text-[#450d0d] border-b border-[#c85500] box-border">
      <div className="w-[29px] shrink-0 bg-[#d85f00] border-r-2 border-[#a85a20] flex flex-col items-center">
        <div className="mt-[11px] w-[17px] h-[17px] rounded-[5px] bg-[#e8a8a0] flex items-center justify-center border border-[#cf8a80] box-border">
          <svg width="9" height="9"><path d="M0 1 H9 M0 4.5 H9 M0 8 H9" stroke="#2a0808" strokeWidth="1.6" /></svg>
        </div>
        <div className="mt-[23px] text-[15px] leading-[17px] text-[#6a2a06] text-center">L<br />F<br />O</div>
        <div className="mt-[9px] text-[15px] text-[#6a2a06]">1</div>
      </div>
      <div className="ml-[21px] pt-[2.3px] flex flex-col">
        <HSlider v={0.435} label="Rate" t={ORANGE} />
        <HSlider v={0} label="Phase" t={ORANGE} />
        <HSlider v={0.5} label="Deform" t={ORANGE} kind="bi" />
        <HSlider v={1} label="Amplitude" t={ORANGE} />
      </div>
      <div className="ml-[27px] w-[86px] pt-[11px]">
        <div className="h-[65px] rounded-[6px] bg-[#e8a8a0] border-2 border-[#d08c84] text-[14px] text-center leading-[19px] p-[1px] box-border text-[#3f0a0a]">
          <div className="h-[20px] border-b border-[#d08c84]">Freerun</div>
          <div className="h-[18px] mt-[1px] bg-[#ff6a00] leading-[18px] -mx-px">Keytrigger</div>
          <div className="h-[20px] mt-[1px] border-t border-[#d08c84]">Random</div>
        </div>
        <div className="h-[23px] mt-[41px] rounded-[6px] bg-[#e8a8a0] border-2 border-[#d08c84] text-[14px] text-center leading-[19px] box-border text-[#3f0a0a]">Unipolar</div>
      </div>
      <div className="ml-[22px] mt-[11px] w-[86px] h-[129px] rounded-[6px] bg-[#e8a8a0] border-2 border-[#d08c84] grid grid-cols-2 grid-rows-5 box-border overflow-hidden">
        {icons.map((ic, i) => (
          <div key={i} className={`${SHAPE} ${i % 2 === 0 ? "border-r-2" : ""} ${i < 8 ? "border-b" : ""} ${i === 0 ? "bg-[#ff6a00] rounded-[3px] m-[1px]" : ""}`}>
            <ShapeIcon d={ic.d} fill={ic.fill} />
          </div>
        ))}
        <div className="flex items-center justify-center italic text-[10px] [font-family:'Liberation_Serif',serif] text-[#450d0d]">f=ax+b</div>
      </div>
      <svg width="494" height="155" viewBox="518 828 494 155" className="ml-[30px] shrink-0">
        {dotRows.map((y) => [...Array(55).keys()].map((i) => <circle key={`${y}-${i}`} cx={521 + i * 8.95} cy={y} r="0.7" fill="#c85000" />))}
        <line x1="519" x2="1011" y1="845.3" y2="845.3" stroke="#c85000" strokeWidth="1.2" />
        <line x1="519" x2="1011" y1="903.3" y2="903.3" stroke="#c85000" strokeWidth="1.2" />
        <line x1="519" x2="1011" y1="960.3" y2="960.3" stroke="#c85000" strokeWidth="1.2" />
        <polyline points={sine.join(" ")} fill="none" stroke="#2a0808" strokeWidth="1.5" />
        <line x1="519" x2="519" y1="961" y2="968" stroke="#450d0d" strokeWidth="1" />
        <line x1="741.7" x2="741.7" y1="961" y2="968" stroke="#450d0d" strokeWidth="1" />
        <line x1="965.7" x2="965.7" y1="961" y2="968" stroke="#450d0d" strokeWidth="1" />
        <text x="521" y="975" fontSize="13" fill="#450d0d" fontFamily="Lato">0 s</text>
        <text x="745" y="975" fontSize="13" fill="#450d0d" fontFamily="Lato">2.5 s</text>
        <text x="968" y="975" fontSize="13" fill="#450d0d" fontFamily="Lato">5 s</text>
      </svg>
      <div className="ml-[27px] w-[210px]">
        <div className="flex items-center h-[22px] mt-[1px] ml-[10px]">
          <div className="w-[44px] h-[1.5px] bg-[#450d0d] -translate-y-[2px]" />
          <span className="w-[117px] pl-[4px] text-center text-[17px] font-medium">LFO EG</span>
          <div className="w-[44px] h-[1.5px] bg-[#450d0d] -translate-y-[2px]" />
        </div>
        <div className="flex gap-[10.1px] ml-[19px] mt-[15px]">
          <VSlider v={0} label="D" t={ORANGE} range={67} labelCls="left-[8px]" />
          <VSlider v={0} label="A" t={ORANGE} range={67} labelCls="left-[8px]" />
          <VSlider v={0} label="H" t={ORANGE} range={67} labelCls="left-[8px]" />
          <VSlider v={0.615} label="D" t={ORANGE} range={67} labelCls="left-[8px]" />
          <VSlider v={1} label="S" t={ORANGE} range={67} labelCls="left-[8px]" />
          <VSlider v={1} label="R" t={ORANGE} range={67} labelCls="left-[9px]" />
        </div>
      </div>
    </div>
  );
}

function RedSection() {
  return (
    <div className="h-[305px] pt-[11px] pl-[11px] bg-[#ff0000] w-[1287px]">
      <div className="w-[1266px] h-[283px] bg-[#2a0f1a]">
        <ModBar />
        <LfoPanel />
      </div>
    </div>
  );
}

function SectionHead({ name, className = "" }) {
  return (
    <div className={`ml-[14px] w-[218px] h-[20px] border-b-[2.5px] border-[#6aa86a] text-[#5f9a5f] text-[15.4px] leading-[23px] box-content ${className}`}>{name}</div>
  );
}

function FxSlider({ className = "ml-[19px]", ...props }) {
  return <HSlider t={GREEN} className={className} {...props} />;
}

function FxBox({ x, y, label, on, w = 32 }) {
  return (
    <g>
      <rect x={x} y={y} width={w} height="18" fill={on ? "#b8f0b8" : "#6aaa6a"} stroke="#134f13" strokeWidth="1.4" />
      {label
        ? <text x={x + w / 2} y={y + 13.5} textAnchor="middle" fontSize="12.5" fontFamily="Lato" fill={on ? "#134f13" : "#a8e0a8"}>{label}</text>
        : <rect x={x + w / 2 - 5} y={y + 8} width="10" height="1.6" fill="#b8f0b8" />}
    </g>
  );
}

function GreenTri({ x, y, dir }) {
  const p = {
    r: `${x + 4},${y} ${x - 2},${y - 3.5} ${x - 2},${y + 3.5}`,
    d: `${x},${y + 4} ${x - 3.5},${y - 2} ${x + 3.5},${y - 2}`,
    u: `${x},${y - 4} ${x - 3.5},${y + 2} ${x + 3.5},${y + 2}`,
  }[dir];
  return <polygon points={p} fill="#134f13" />;
}

function FxDiagram() {
  const xs = [1364, 1403, 1443];
  const tapX = [1340.5, 1380, 1419, 1459];
  return (
    <svg width="249" height="111" viewBox="1298 129 249 111" className="block">
      <path d="M1356 147 H1364 M1396 147 H1403 M1435 147 H1443 M1474 147 H1488 V178 M1474 224 H1488 V195 M1356 224 H1364 M1396 224 H1403 M1435 224 H1443 M1340.5 165 H1488 M1340.5 207 H1488 M1494 187 H1498 V147 H1504 M1520 156 V164 M1520 182 V190 M1520 208 V215" fill="none" stroke="#134f13" strokeWidth="1.4" />
      {tapX.map((x) => <path key={x} d={`M${x} 165 V175 M${x} 207 V197`} stroke="#134f13" strokeWidth="1.4" />)}
      {tapX.map((x) => <GreenTri key={`d${x}`} x={x} y={173} dir="d" />)}
      {tapX.map((x) => <GreenTri key={`u${x}`} x={x} y={199} dir="u" />)}
      <path d="M1357 186 H1364 M1397 186 H1403 M1436 186 H1443" stroke="#134f13" strokeWidth="1.2" strokeDasharray="1.5 2" />
      <path d="M1474 186 H1480" stroke="#134f13" strokeWidth="1.4" />
      <FxBox x={1305} y={138} label="A" on w={15} />
      <FxBox x={1325} y={138} label="DLY" on w={31} />
      {xs.map((x) => <FxBox key={x} x={x} y={138} w={x === 1443 ? 31 : 32} />)}
      <FxBox x={1325} y={177} label="DLY" w={31} />
      {xs.map((x) => <FxBox key={x} x={x} y={177} w={x === 1443 ? 31 : 32} />)}
      <FxBox x={1305} y={215} label="B" on w={15} />
      <FxBox x={1325} y={215} w={31} />
      {xs.map((x) => <FxBox key={x} x={x} y={215} w={x === 1443 ? 31 : 32} />)}
      {[138, 164, 190, 215].map((y) => <FxBox key={y} x={1504} y={y} />)}
      {[1360, 1399, 1439].map((x) => <GreenTri key={x} x={x} y={147} dir="r" />)}
      {[1360, 1399, 1439].map((x) => <GreenTri key={x} x={x} y={224} dir="r" />)}
      <GreenTri x={1479} y={186.5} dir="r" />
      <GreenTri x={1488} y={176} dir="d" />
      <GreenTri x={1488} y={197} dir="u" />
      <GreenTri x={1500} y={147} dir="r" />
      {[161, 187, 212].map((y) => <GreenTri key={y} x={1520} y={y} dir="d" />)}
      <circle cx="1488" cy="186.7" r="5.5" fill="#b8f0b8" stroke="#134f13" strokeWidth="1.4" />
      <path d="M1485 186.7 H1491 M1488 183.7 V189.7" stroke="#134f13" strokeWidth="1.2" />
    </svg>
  );
}

function GreenSection() {
  return (
    <div className="w-[272px] h-[876px] p-[11px] bg-[#00ff00]">
      <div className="w-[249px] h-[854px] bg-[#9bd99b] text-[#164f16] overflow-hidden">
        <FxDiagram />
        <div className="flex flex-col mt-[14px]">
          <FxSlider v={1} label="Send FX 1 Return" />
          <FxSlider v={1} label="Send FX 2 Return" />
        </div>
        <div className="mt-[11px] h-[2px] bg-[#8ccc8c]" />
        <div className="ml-[12px] mt-[7.5px] w-[219px] h-[23.5px] rounded-[5px] bg-[#b0eeb0] border border-[#8ccc8c] flex items-center justify-between px-[6px] text-[15.5px] box-border">
          A Insert FX 1
          <span className="flex items-center gap-[5px] text-[15px]">Delay <svg width="9" height="6"><polygon points="0,0 9,0 4.5,6" fill="#164f16" /></svg></span>
        </div>
        <div className="ml-[179px] mt-[4px] w-[53px] h-[19px] rounded-[6px] border-2 border-[#8ccc8c] bg-[#a8e4a8] flex items-center justify-center box-border">
          <Arrows color="#134f13" />
        </div>
        <SectionHead name="Input" className="-mt-[4px]" />
        <FxSlider v={0.5} label="Channel" kind="bi" className="ml-[19px] mt-[1px]" />
        <SectionHead name="Delay Time" className="mt-[10px]" />
        <FxSlider v={0} label="Left" className="ml-[19px] mt-[1.2px]" />
        <FxSlider v={0} label="Right" className="ml-[19px] -mt-[2px]" />
        <SectionHead name="Feedback/EQ" className="mt-[9.8px]" />
        <FxSlider v={0} label="Feedback" className="ml-[19px] mt-[1.3px]" />
        <FxSlider v={0} label="Crossfeed" className="ml-[19px] -mt-[2px]" />
        <FxSlider v={0.33} label="Low Cut" className="ml-[19px] -mt-[2px]" />
        <FxSlider v={0.765} label="High Cut" className="ml-[19px] -mt-[2px]" />
        <SectionHead name="Modulation" className="mt-[8.7px]" />
        <FxSlider v={0.47} label="Rate" className="ml-[19px] mt-[1.5px]" />
        <FxSlider v={0.17} label="Depth" className="ml-[19px] -mt-[2px]" />
        <SectionHead name="Output" className="mt-[8.7px]" />
        <FxSlider v={0.685} label="Width" kind="bi" midTick className="ml-[19px] mt-[1.5px]" />
        <FxSlider v={0.19} label="Mix" className="ml-[19px] -mt-[2px]" />
        <div className="ml-[151px] mt-[24px] w-[85px] h-[24px] rounded-[6px] border-2 border-[#8ccc8c] bg-[#a8e4a8] flex items-center box-border pl-[8px] text-[17px] text-[#0f4a0f]">
          <svg width="13" height="13" viewBox="0 0 13 13" className="mr-[7px]">
            <rect width="13" height="13" fill="#d0ae10" />
            <path d="M1 4 H5 L8 8 H12 M1 9 H5 L8 5 H12" stroke="#e9e8a6" strokeWidth="1.5" fill="none" />
          </svg>
          Menu
        </div>
      </div>
    </div>
  );
}

export default function App() {
  return (
    <div className="w-[1559px] h-[994px] overflow-hidden [font-family:Lato,sans-serif] bg-[#ffff00]">
      <TopBar />
      <div className="flex">
        <div className="w-[1287px]">
          <BlueSection />
          <RedSection />
        </div>
        <GreenSection />
      </div>
    </div>
  );
}
